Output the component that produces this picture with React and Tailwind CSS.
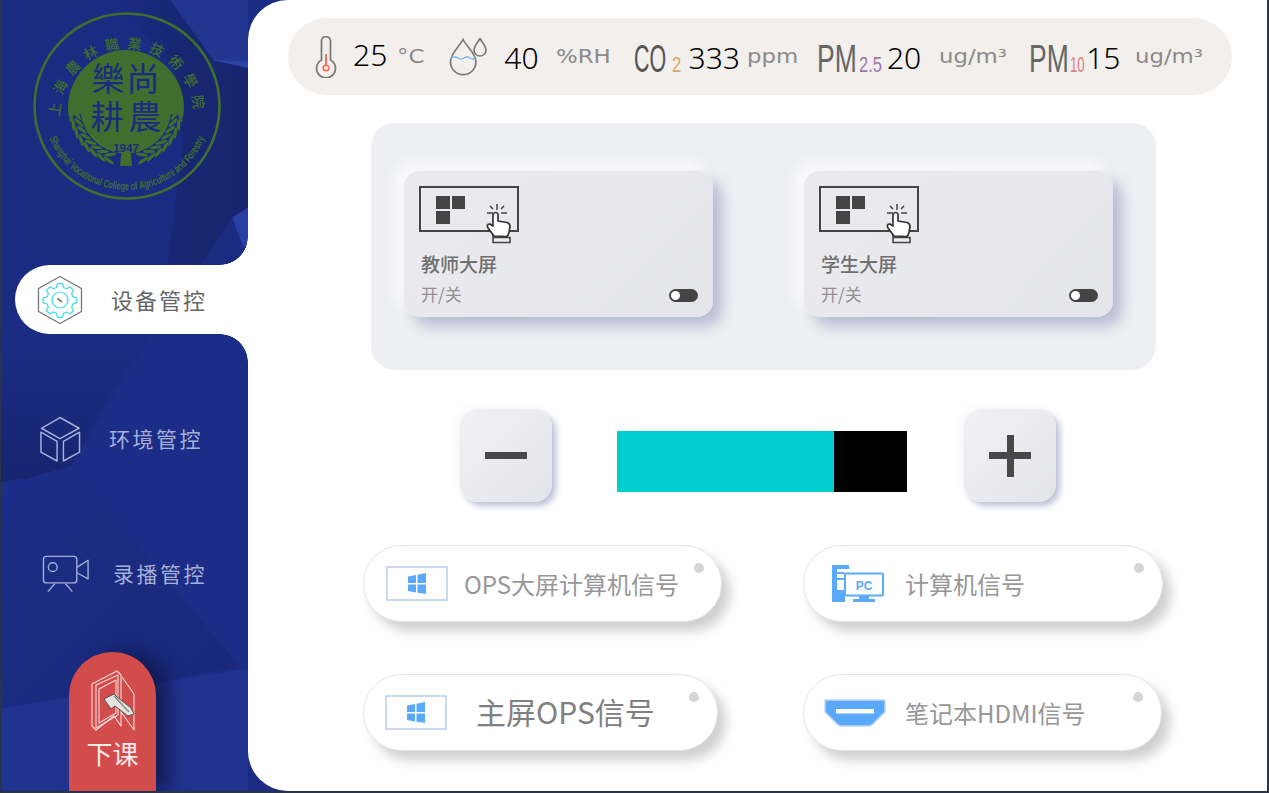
import React from "react";

const CJK = "font-['Noto_Sans_CJK_SC','Noto_Sans',sans-serif]";

function SidebarBackground() {
  return (
    <svg className="absolute inset-0 h-full w-full" viewBox="0 0 248 793" preserveAspectRatio="none">
      <defs>
        <linearGradient id="wedge" x1="0" y1="0" x2="1" y2="0">
          <stop offset="0" stopColor="#1a2b82" />
          <stop offset="0.55" stopColor="#182670" />
          <stop offset="1" stopColor="#18256e" />
        </linearGradient>
        <linearGradient id="fade" x1="0" y1="0" x2="0" y2="1">
          <stop offset="0" stopColor="#1b2c85" />
          <stop offset="1" stopColor="#17256f" />
        </linearGradient>
        <linearGradient id="low" x1="0" y1="0" x2="1" y2="1">
          <stop offset="0" stopColor="#1c2e88" />
          <stop offset="1" stopColor="#192878" />
        </linearGradient>
      </defs>
      <rect width="248" height="793" fill="#1a2b82" />
      <polygon points="170,0 248,0 248,68 213,60" fill="#22358f" />
      <polygon points="115,0 170,0 213,60 248,68 248,212 232,222 200,265 167,265 182,150 175,70" fill="url(#wedge)" />
      <polygon points="210,60 248,62 248,68" fill="#2b44ab" />
      <polygon points="232,218 248,208 248,245 243,248" fill="#2a3fa6" />
      <polygon points="232,218 243,248 225,265 200,265" fill="#1b2c80" />
      <polygon points="0,335 150,335 112,390 70,468 25,480 0,483" fill="url(#fade)" />
      <polygon points="70,468 150,335 248,335 248,668 240,668" fill="#1b2d86" />
      <polygon points="0,483 25,480 70,468 240,668 0,710" fill="url(#low)" />
      <polygon points="0,710 248,670 248,793 0,793" fill="#20348f" />
    </svg>
  );
}

function Logo() {
  const c = "#3f6e2e";
  const b = "#1a2b80";
  const cx = 94;
  const cy = 96;
  const leaves = [];
  for (let i = 0; i < 8; i++) {
    const a = (76 - i * 9) * (Math.PI / 180);
    const deg = 76 - i * 9;
    const r = 52;
    leaves.push({ x: Math.sin(a) * r, y: Math.cos(a) * r, deg });
  }
  const arc = (s) => {
    const a1 = (82 * Math.PI) / 180;
    const a2 = (6 * Math.PI) / 180;
    return `M ${cx + s * Math.sin(a1) * 52} ${cy + Math.cos(a1) * 52} A 52 52 0 0 ${s > 0 ? 1 : 0} ${cx + s * Math.sin(a2) * 52} ${cy + Math.cos(a2) * 52}`;
  };
  return (
    <svg viewBox="0 0 190 190" className="h-[190px] w-[190px]">
      <defs>
        <path id="cnArc" d="M 28 103.5 A 67 67 0 1 1 162 103.5" />
        <path id="enArc" d="M 11 94 A 84 84 0 0 0 179 94" />
      </defs>
      <circle cx="95" cy="94" r="92.5" fill="none" stroke={c} strokeWidth="2.6" />
      <circle cx={cx} cy={cy} r="58" fill={c} />
      <path d={arc(1)} fill="none" stroke={b} strokeWidth="13" />
      <path d={arc(-1)} fill="none" stroke={b} strokeWidth="13" />
      <text fontSize="14" fill={c} className={CJK} fontWeight="500">
        <textPath href="#cnArc" startOffset="50%" textAnchor="middle" letterSpacing="7.3">上海農林職業技術學院</textPath>
      </text>
      <text fontSize="11" fill={c} fontFamily="'Liberation Sans', sans-serif" fontWeight="700">
        <textPath href="#enArc" startOffset="50%" textAnchor="middle" lengthAdjust="spacingAndGlyphs" textLength="198">Shanghai Vocational College of Agriculture and Forestry</textPath>
      </text>
      <g fill={b} className={CJK} fontSize="33" textAnchor="middle" fontWeight="400">
        <text x="76" y="79">樂</text>
        <text x="111" y="79">尚</text>
        <text x="75" y="117">耕</text>
        <text x="113" y="117">農</text>
      </g>
      <text x="94" y="140" fill={b} fontSize="11.5" textAnchor="middle" fontFamily="'Liberation Sans', sans-serif" fontWeight="700">1947</text>
      <g fill={c}>
        {leaves.map((l, i) => (
          <g key={i}>
            {[-1, 1].map((s) => (
              <g key={s} transform={`translate(${cx + s * l.x} ${cy + l.y}) rotate(${s * -l.deg})`}>
                <ellipse cx={s * 5} cy="3" rx="6" ry="1.7" transform={`rotate(${s * -22} ${s * 5} 3)`} />
                <ellipse cx={s * 5} cy="-3" rx="6" ry="1.7" transform={`rotate(${s * 22} ${s * 5} -3)`} />
              </g>
            ))}
          </g>
        ))}
      </g>
    </svg>
  );
}

function GearHex() {
  return (
    <svg viewBox="0 0 46 50" className="h-[50px] w-[46px]" fill="none">
      <path d="M23 1.5 L44.5 13.5 V36.5 L23 48.5 L1.5 36.5 V13.5 Z" stroke="#777" strokeWidth="1.3" strokeLinejoin="round" />
      <path d="M20.5 8.5 h5 l1 4 l3 1.3 l3.6 -2 l3.5 3.5 l-2 3.6 l1.3 3 l4 1 v5 l-4 1 l-1.3 3 l2 3.6 l-3.5 3.5 l-3.6 -2 l-3 1.3 l-1 4 h-5 l-1 -4 l-3 -1.3 l-3.6 2 l-3.5 -3.5 l2 -3.6 l-1.3 -3 l-4 -1 v-5 l4 -1 l1.3 -3 l-2 -3.6 l3.5 -3.5 l3.6 2 l3 -1.3 Z" stroke="#3fdcec" strokeWidth="1.2" strokeLinejoin="round" />
      <circle cx="23" cy="25" r="8" stroke="#3fdcec" strokeWidth="1.2" />
      <path d="M20.5 23.5 L25 27" stroke="#777" strokeWidth="1.6" />
    </svg>
  );
}

function Cube() {
  return (
    <svg viewBox="0 0 44 48" className="h-[47px] w-[43px]" fill="none" stroke="#a5b0d6" strokeWidth="1.5" strokeLinejoin="round">
      <path d="M21.5 1.5 L41 12.5 L21.5 23 L2.5 12.5 Z" />
      <path d="M2 16.5 L18.5 26 V46 L2 37 Z" />
      <path d="M41.5 16.5 L25 26 V46 L41.5 37 Z" />
    </svg>
  );
}

function Camera() {
  return (
    <svg viewBox="0 0 50 38" className="h-[38px] w-[49px]" fill="none" stroke="#a5b0d6" strokeWidth="1.4" strokeLinejoin="round">
      <rect x="1.5" y="1" width="34" height="27" rx="3" />
      <circle cx="11" cy="12" r="4.5" />
      <path d="M36 12 L47 5 V24 L36 18" />
      <path d="M13 29 L6 37 M24 29 L31 37" />
    </svg>
  );
}

function DoorIcon() {
  return (
    <svg viewBox="0 0 46 62" className="h-[62px] w-[46px]" fill="none">
      <g stroke="#f7d9d9" strokeWidth="1.1" strokeLinejoin="round">
        <path d="M2 14 L27 1 L31 5 V56 L24 46 L6 60 L2 56 Z" />
        <path d="M6 15 L28 5 V45 L6 58 Z" />
        <path d="M9 19 L26 10 V43 L9 53 Z" />
        <path d="M32 7 L44 24 V60 L31 42" />
      </g>
      <path d="M14 29 L24 24 L27 27 L41 38 L44 44 L38 46 L25 36 L21 39 Z" fill="#e4e4df" stroke="#555" strokeWidth="1" strokeLinejoin="round" />
      <path d="M24 26 L39 42" stroke="#888" strokeWidth="1.4" />
    </svg>
  );
}

function Thermo() {
  return (
    <svg viewBox="0 0 24 42" className="h-[42px] w-[24px]" fill="none">
      <path d="M7.5 24 V5 a4.5 4.5 0 0 1 9 0 V24 a9.5 9.5 0 1 1 -9 0 Z" stroke="#7b7b7b" strokeWidth="1.8" />
      <path d="M12 18 V30" stroke="#f0694f" strokeWidth="1.8" />
      <circle cx="12" cy="32" r="2.8" stroke="#f0694f" strokeWidth="1.5" />
    </svg>
  );
}

function Drops() {
  return (
    <svg viewBox="0 0 40 38" className="h-[38px] w-[40px]" fill="none" stroke="#7b7b7b" strokeWidth="1.7">
      <path d="M14 1.5 C11 8 1.5 15 1.5 24 a12.7 12.7 0 0 0 25.4 0 C26.9 15 17 8 14 1.5 Z" />
      <path d="M31 0.5 C29 4 25 8 25 12 a6 6 0 0 0 12 0 C37 8 33 4 31 0.5 Z" />
      <path d="M2 20 q4 -2 7 0 t6 0 t6 0 t5 0" stroke="#7fb5ea" strokeWidth="1.4" />
    </svg>
  );
}

function Condensed({ children, className, w, inner }) {
  return (
    <span className={`inline-block whitespace-nowrap font-['Liberation_Sans',sans-serif] ${w} ${className}`}>
      <span className={`inline-block origin-left ${inner}`}>{children}</span>
    </span>
  );
}

function Num({ children, className = "" }) {
  return <span className={`font-['Noto_Sans',sans-serif] text-[30px] font-light leading-none text-black ${className}`}>{children}</span>;
}

function Unit({ children, w, className = "" }) {
  return (
    <span className={`inline-block whitespace-nowrap font-['DejaVu_Sans',sans-serif] text-[19px] leading-none text-[#8a8a8a] ${w} ${className}`}>
      <span className="inline-block origin-left scale-x-[1.2]">{children}</span>
    </span>
  );
}

function SensorBar() {
  return (
    <div className="ml-[40px] flex h-[77px] w-[944px] items-center rounded-full bg-[#f2efec] pl-[26px]">
      <Thermo />
      <Num className="ml-[15px] -mt-[3px]">25</Num>
      <Unit w="w-[27px]" className="ml-[10px]">°C</Unit>
      <div className="ml-[25px]"><Drops /></div>
      <Num className="ml-[15px] mt-[3px]">40</Num>
      <Unit w="w-[54px]" className="ml-[17px]">%RH</Unit>
      <span className="ml-[24px] mt-[3px] flex items-baseline">
        <Condensed className="text-[39px] leading-none text-[#555]" w="w-[38px]" inner="scale-x-[0.55]">CO</Condensed>
        <Condensed className="text-[22px] leading-none text-[#d9a95e]" w="w-[17px]" inner="scale-x-[0.75]">2</Condensed>
      </span>
      <Num className="mt-[3px]">333</Num>
      <Unit w="w-[48px]" className="ml-[7px]">ppm</Unit>
      <span className="ml-[22px] mt-[3px] flex items-baseline">
        <Condensed className="text-[39px] leading-none text-[#666]" w="w-[42px]" inner="scale-x-[0.68]">PM</Condensed>
        <Condensed className="text-[22px] leading-none text-[#9a79ad]" w="w-[28px]" inner="scale-x-[0.75]">2.5</Condensed>
      </span>
      <Num className="mt-[3px]">20</Num>
      <Unit w="w-[67px]" className="ml-[18px]">ug/m³</Unit>
      <span className="ml-[23px] mt-[3px] flex items-baseline">
        <Condensed className="text-[39px] leading-none text-[#666]" w="w-[41px]" inner="scale-x-[0.68]">PM</Condensed>
        <Condensed className="text-[22px] leading-none text-[#e08080]" w="w-[16px]" inner="scale-x-[0.6]">10</Condensed>
      </span>
      <Num className="mt-[3px]">15</Num>
      <Unit w="w-[67px]" className="ml-[15px]">ug/m³</Unit>
    </div>
  );
}

function ScreenIcon() {
  return (
    <svg viewBox="0 0 100 58" className="h-[58px] w-[100px]" fill="none">
      <rect x="1" y="1" width="98" height="44" stroke="#444" strokeWidth="2" />
      <rect x="17" y="10" width="14" height="13" fill="#444" />
      <rect x="33" y="10" width="13" height="13" fill="#444" />
      <rect x="17" y="25" width="14" height="13" fill="#444" />
      <path d="M74 47 V56.500 H91 V51.500 H74" stroke="#444" strokeWidth="1.6" fill="#eceDf1" />
      <path d="M78 18 v6 M68 27 h6 M82 27 h6 M71 20 l3 3 M85 20 l-3 3" stroke="#444" strokeWidth="1.5" />
      <path d="M75 50 l-6 -8 q-2 -4 2 -4 l3 2 v-12 q3 -3 5 0 v7 l9 1.500 q3 1 3 4 l-1 6 q-1 4 -3 4 Z" fill="#fff" stroke="#333" strokeWidth="1.7" strokeLinejoin="round" />
    </svg>
  );
}

function ScreenCard({ title }) {
  return (
    <div className="relative flex h-[146px] w-[309px] flex-col rounded-[16px] bg-[linear-gradient(135deg,#ebebef,#e4e5eb)] pl-[15px] pt-[15px] shadow-[9px_9px_14px_#b7bcd3,-8px_-8px_14px_#fbfbfd]">
      <ScreenIcon />
      <div className={`ml-[2px] mt-[7px] text-[19px] font-medium leading-[26px] text-[#707070] ${CJK}`}>{title}</div>
      <div className={`ml-[2px] mt-[5px] text-[17px] leading-[24px] text-[#8f8f8f] ${CJK}`}>开/关</div>
      <div className="absolute bottom-[15px] right-[15px] flex h-[13px] w-[29px] items-center rounded-full bg-[#444] pl-[2px]">
        <div className="h-[9px] w-[9px] rounded-full bg-white" />
      </div>
    </div>
  );
}

function StepButton({ children }) {
  return (
    <div className="flex h-[93px] w-[92px] shrink-0 items-center justify-center rounded-[18px] bg-[linear-gradient(135deg,#f1f1f5,#e3e4ea)] shadow-[4px_4px_6px_#bcc1d6,-4px_-4px_8px_#fafafc]">
      {children}
    </div>
  );
}

function Win() {
  return (
    <svg viewBox="0 0 62 36" className="h-[36px] w-[62px]" fill="none">
      <rect x="1" y="1" width="60" height="33" stroke="#b9cdea" strokeWidth="1.5" />
      <path d="M22 10.500 L30 9 V17 H22 Z M31.500 8.700 L40 7 V17 H31.500 Z M22 18.500 H30 V26.500 L22 25 Z M31.500 18.500 H40 V28 L31.500 26.800 Z" fill="#5aa9fb" />
    </svg>
  );
}

function Pc() {
  return (
    <svg viewBox="0 0 54 40" className="h-[40px] w-[54px]" fill="none">
      <path d="M1 1 H18 V5 H6 V38 H1 Z" fill="#5aa9fb" />
      <path d="M6 9 H13 M6 15 H13" stroke="#5aa9fb" strokeWidth="2" />
      <rect x="14" y="9.500" width="38" height="22" rx="1" stroke="#5aa9fb" strokeWidth="2" fill="#fff" />
      <rect x="6" y="26" width="8" height="12" fill="#5aa9fb" />
      <rect x="28" y="32" width="10" height="3" fill="#5aa9fb" />
      <rect x="22" y="35" width="22" height="3" fill="#5aa9fb" />
      <text x="33" y="26" textAnchor="middle" fontSize="12" fontWeight="700" fill="#5aa9fb" fontFamily="'Liberation Sans', sans-serif">PC</text>
    </svg>
  );
}

function Hdmi() {
  return (
    <svg viewBox="0 0 62 28" className="h-[28px] w-[62px]" fill="none">
      <path d="M1 1 H61 V13 L49 25 L46 27 H16 L13 25 L1 13 Z" fill="#5aa9fb" stroke="#c5d6ee" strokeWidth="1.5" strokeLinejoin="round" />
      <rect x="12" y="10" width="38" height="4.500" fill="#fff" />
    </svg>
  );
}

function Source({ icon, label, w, iconCls, textCls, dotCls }) {
  return (
    <div className={`relative flex h-[77px] shrink-0 items-center rounded-full border border-[#e6e6e6] bg-white shadow-[8px_9px_12px_#cfcfcf] ${w}`}>
      <div className={iconCls}>{icon}</div>
      <div className={`whitespace-nowrap ${CJK} ${textCls}`}>{label}</div>
      <div className={`absolute h-[10px] w-[10px] rounded-full bg-[#d5d5d5] ${dotCls}`} />
    </div>
  );
}

export default function App() {
  return (
    <div className="relative flex h-[793px] w-[1269px] overflow-hidden border-b-2 border-l border-r-2 border-[#2b3348] bg-[#1b2c85]">
      <aside className="relative flex w-[247px] shrink-0 flex-col">
        <SidebarBackground />
        <div className="relative ml-[31px] mt-[12px] h-[190px]"><Logo /></div>

        <nav className="relative mt-[63px] flex flex-col">
          <div className={`relative z-10 ml-[14px] flex h-[69px] w-[240px] items-center rounded-l-full bg-white pl-[22px] text-[22px] tracking-[2px] text-[#666] ${CJK}`}>
            <GearHex />
            <span className="ml-[28px]">设备管控</span>
            <div className="absolute -top-[28px] right-[7px] h-[28px] w-[28px] bg-[radial-gradient(circle_at_0_0,transparent_27.500px,white_28px)]" />
            <div className="absolute -bottom-[28px] right-[7px] h-[28px] w-[28px] bg-[radial-gradient(circle_at_0_100%,transparent_27.500px,white_28px)]" />
          </div>
          <div className={`ml-[38px] mt-[81px] flex h-[48px] items-center text-[21px] tracking-[2.500px] text-[#a5b0d6] ${CJK}`}>
            <Cube />
            <span className="ml-[27px]">环境管控</span>
          </div>
          <div className={`ml-[41px] mt-[91px] flex h-[40px] items-center text-[21px] tracking-[2.500px] text-[#a5b0d6] ${CJK}`}>
            <Camera />
            <span className="ml-[22px]">录播管控</span>
          </div>
        </nav>

        <div className={`absolute bottom-0 left-[68px] flex h-[139px] w-[87px] flex-col items-center rounded-t-full bg-[#d34c4c] pt-[18px] text-[26px] leading-[36px] text-[#fbeaea] shadow-[14px_0_18px_rgba(15,22,70,0.75)] ${CJK}`}>
          <DoorIcon />
          <span className="mt-[3px]">下课</span>
        </div>
      </aside>

      <main className="relative z-0 flex min-w-0 flex-1 flex-col rounded-l-[40px] bg-white pt-[18px]">
        <SensorBar />

        <div className="ml-[123px] mt-[28px] flex h-[247px] w-[785px] gap-[91px] rounded-[24px] bg-[#eeeff3] pl-[33px] pt-[48px]">
          <ScreenCard title="教师大屏" />
          <ScreenCard title="学生大屏" />
        </div>

        <div className="ml-[212px] mt-[39px] flex h-[93px] items-start">
          <StepButton>
            <div className="h-[7px] w-[42px] bg-[#484848]" />
          </StepButton>
          <div className="ml-[65px] mt-[22px] flex h-[61px] w-[290px] bg-black">
            <div className="h-full w-[217px] bg-[#00ced1]" />
          </div>
          <div className="ml-[57px]">
            <StepButton>
              <div className="relative h-[42px] w-[42px]">
                <div className="absolute left-0 top-[17.500px] h-[7px] w-[42px] bg-[#484848]" />
                <div className="absolute left-[17.500px] top-0 h-[42px] w-[7px] bg-[#484848]" />
              </div>
            </StepButton>
          </div>
        </div>

        <div className="ml-[115px] mt-[43px] flex gap-[81px]">
          <Source w="w-[359px]" icon={<Win />} iconCls="ml-[22px]" label="OPS大屏计算机信号" textCls="ml-[16px] text-[24px] text-[#979797]" dotCls="right-[17px] top-[17px]" />
          <Source w="w-[360px]" icon={<Pc />} iconCls="ml-[27px]" label="计算机信号" textCls="ml-[20px] text-[24px] text-[#979797]" dotCls="right-[18px] top-[17px]" />
        </div>
        <div className="ml-[115px] mt-[52px] flex gap-[85px]">
          <Source w="w-[355px]" icon={<Win />} iconCls="ml-[21px]" label="主屏OPS信号" textCls="ml-[29px] -mt-[2px] text-[30px] text-[#808080]" dotCls="right-[18px] top-[17px]" />
          <Source w="w-[359px]" icon={<Hdmi />} iconCls="ml-[20px]" label="笔记本HDMI信号" textCls="ml-[19px] text-[24px] text-[#979797]" dotCls="right-[18px] top-[17px]" />
        </div>
      </main>
    </div>
  );
}
